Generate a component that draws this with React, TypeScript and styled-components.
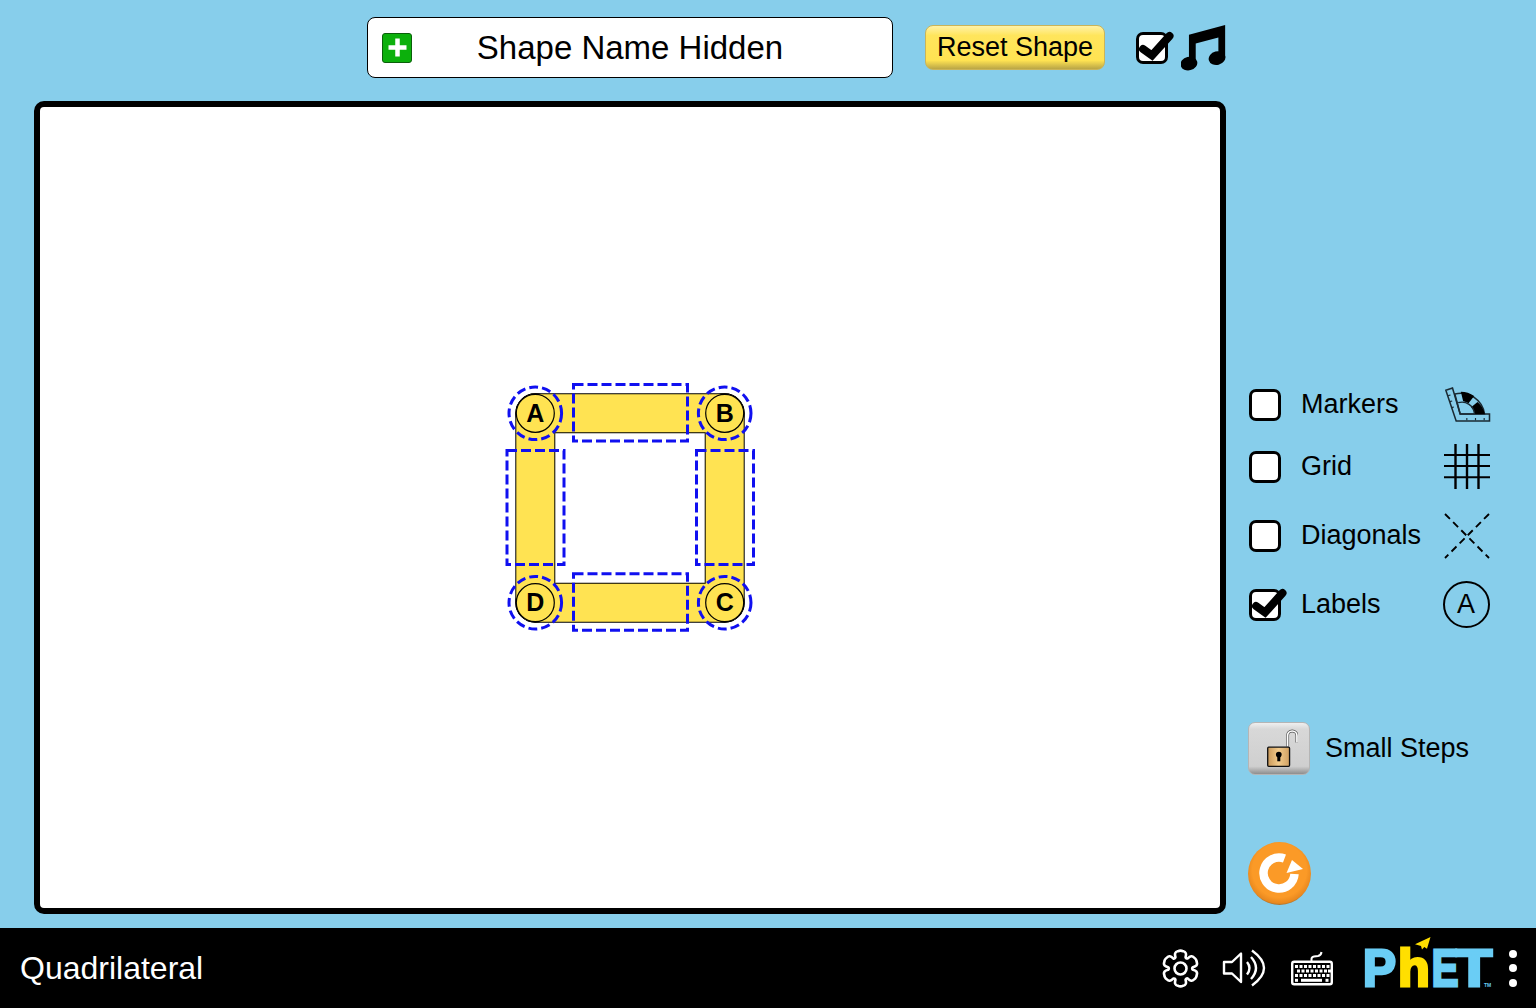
import React from 'react';
import styled, { createGlobalStyle } from 'styled-components';

const GlobalStyle = createGlobalStyle`
  * {
    box-sizing: border-box;
  }
  html, body {
    margin: 0;
    padding: 0;
    background: #87ceeb;
  }
  body {
    font-family: "Liberation Sans", Arial, sans-serif;
    color: #000;
  }
`;

const vertices = [
  { label: 'A', x: 535.3, y: 413.3 },
  { label: 'B', x: 724.7, y: 413.3 },
  { label: 'C', x: 724.7, y: 602.7 },
  { label: 'D', x: 535.3, y: 602.7 },
];

const sideBands = [
  { x: 516.3, y: 394.3, w: 227.4, h: 38 },
  { x: 516.3, y: 583.7, w: 227.4, h: 38 },
  { x: 516.3, y: 394.3, w: 38, h: 227.4 },
  { x: 705.7, y: 394.3, w: 38, h: 227.4 },
];

const sideHandles = [
  { x: 573.5, y: 384.5, w: 114, h: 56.5 },
  { x: 573.5, y: 573.8, w: 114, h: 56.5 },
  { x: 507, y: 450.5, w: 57, h: 114 },
  { x: 696.5, y: 450.5, w: 57, h: 114 },
];

function gearPath(cx: number, cy: number): string {
  const outer = 17.4;
  const inner = 12.4;
  const points: string[] = [];
  for (let i = 0; i < 6; i++) {
    const a = (i * Math.PI) / 3 - Math.PI / 2;
    const pt = (r: number, off: number) =>
      `${(cx + r * Math.cos(a + off)).toFixed(2)} ${(cy + r * Math.sin(a + off)).toFixed(2)}`;
    points.push(
      `${i === 0 ? 'M' : 'L'}${pt(inner, -0.42)}`,
      `Q${pt(outer + 0.4, -0.38)} ${pt(outer, -0.16)}`,
      `Q${pt(outer + 1.2, 0)} ${pt(outer, 0.16)}`,
      `Q${pt(outer + 0.4, 0.38)} ${pt(inner, 0.42)}`,
      `Q${pt(inner - 1.4, 0.52)} ${pt(inner, 0.62)}`,
    );
  }
  return points.join(' ') + ' Z';
}

const CheckBox = ({ checked }: { checked?: boolean }) => (
  <CheckFrame>
    {checked && (
      <CheckMark viewBox="0 0 40 30" width={40} height={30}>
        <path
          d="M7 17 L16 23.5 L33.5 4"
          fill="none"
          stroke="#000"
          strokeWidth={8}
          strokeLinecap="round"
          strokeLinejoin="miter"
        />
      </CheckMark>
    )}
  </CheckFrame>
);

const MusicIcon = () => (
  <svg viewBox="845 75 132 136" width={45} height={46}>
    <path d="M868 104 L975 75 L975 172 L955 172 L955 112 L888 130 L888 190 L868 190 Z" fill="#000" />
    <ellipse cx={868} cy={189} rx={25} ry={20} fill="#000" transform="rotate(-14 868 189)" />
    <ellipse cx={951} cy={173} rx={25} ry={20} fill="#000" transform="rotate(-14 951 173)" />
  </svg>
);

const Diagram = () => (
  <svg viewBox="505 383 250 250" width={250} height={250}>
    {sideBands.map((b, i) => (
      <rect key={i} x={b.x} y={b.y} width={b.w} height={b.h} rx={19} fill="#000" stroke="#000" strokeWidth={2} />
    ))}
    {sideBands.map((b, i) => (
      <rect key={i} x={b.x} y={b.y} width={b.w} height={b.h} rx={19} fill="#ffe352" />
    ))}
    {vertices.map((v) => (
      <circle key={v.label} cx={v.x} cy={v.y} r={19} fill="#ffe352" stroke="#000" strokeWidth={1.2} />
    ))}
    {vertices.map((v) => (
      <VertexLabel key={v.label} x={v.x} y={v.y + 8.5} textAnchor="middle">
        {v.label}
      </VertexLabel>
    ))}
    {sideHandles.map((h, i) => (
      <rect
        key={i}
        x={h.x}
        y={h.y}
        width={h.w}
        height={h.h}
        fill="none"
        stroke="#1010f0"
        strokeWidth={3}
        strokeDasharray="10 4"
      />
    ))}
    {vertices.map((v) => (
      <circle
        key={v.label}
        cx={v.x}
        cy={v.y}
        r={26.3}
        fill="none"
        stroke="#1010f0"
        strokeWidth={3}
        strokeDasharray="9 4"
      />
    ))}
  </svg>
);

const ruleTicks = [
  'M624 61 L631 59',
  'M629 79 L636 77',
  'M634 97 L641 95',
  'M680 128 L680 135',
  'M706 128 L706 135',
  'M732 128 L732 135',
];

const MarkersIcon = () => (
  <svg viewBox="612 35 140 108" width={47} height={36}>
    <path d="M617 45 L637 38 L660 116 L748 116 L748 137 L648 137 Z" fill="none" stroke="#1a2a33" strokeWidth={4.6} />
    {ruleTicks.map((d) => (
      <path key={d} d={d} stroke="#1a2a33" strokeWidth={3.4} />
    ))}
    <path d="M644 56 A72 72 0 0 1 733 116 L660 116 Z" fill="none" stroke="#1a2a33" strokeWidth={4.6} />
    <path d="M662 49 A70 70 0 0 1 702 62 L685 84 A38 38 0 0 0 669 78 Z" fill="#000" />
    <path d="M712 80 A68 68 0 0 1 734 116 L704 116 A38 38 0 0 0 693 96 Z" fill="#000" />
    <path d="M654 82 A38 38 0 0 1 703 116" fill="none" stroke="#1a2a33" strokeWidth={4} />
  </svg>
);

const GridIcon = () => (
  <svg viewBox="0 0 46 45" width={46} height={45}>
    {[11.5, 23, 34.5].map((x) => (
      <line key={x} x1={x} y1={0} x2={x} y2={45} stroke="#000" strokeWidth={2.4} />
    ))}
    {[11, 22, 33.3].map((y) => (
      <line key={y} x1={0} y1={y} x2={46} y2={y} stroke="#000" strokeWidth={1.9} />
    ))}
  </svg>
);

const DiagonalsIcon = () => (
  <svg viewBox="0 0 46 46" width={46} height={46}>
    <line x1={1} y1={1} x2={45} y2={45} stroke="#000" strokeWidth={1.9} strokeDasharray="7 4.5" />
    <line x1={45} y1={1} x2={1} y2={45} stroke="#000" strokeWidth={1.9} strokeDasharray="7 4.5" />
  </svg>
);

const LockIcon = () => (
  <svg viewBox="82 56 92 116" width={31} height={39}>
    <defs>
      <linearGradient id="lockBody" x1="0" x2="1" y1="0" y2="0">
        <stop offset="0" stopColor="#c9995a" />
        <stop offset="0.5" stopColor="#f2cb8c" />
        <stop offset="1" stopColor="#d0a163" />
      </linearGradient>
    </defs>
    <path d="M143 108 L143 76 A14 14 0 0 1 171 76 L171 96" fill="none" stroke="#555" strokeWidth={9} />
    <path d="M143 108 L143 76 A14 14 0 0 1 171 76 L171 96" fill="none" stroke="#fff" strokeWidth={5} />
    <rect x={84} y={110} width={65} height={57} rx={3} fill="url(#lockBody)" stroke="#111" strokeWidth={4} />
    <circle cx={117} cy={132} r={8.5} fill="#000" />
    <rect x={112.5} y={134} width={9} height={18} fill="#000" />
  </svg>
);

const ResetAllIcon = () => (
  <svg viewBox="0 0 63 63" width={63} height={63}>
    <defs>
      <radialGradient id="resetBall" cx="0.5" cy="0.45" r="0.55">
        <stop offset="0.78" stopColor="#fb9a27" />
        <stop offset="0.95" stopColor="#e8881f" />
        <stop offset="1" stopColor="#a5702f" />
      </radialGradient>
    </defs>
    <circle cx={31.5} cy={31.5} r={31.5} fill="url(#resetBall)" />
    <path d="M36.5 16.5 A15.5 15.5 0 1 0 46.5 32" fill="none" stroke="#fff" strokeWidth={8.5} />
    <path d="M44 18 L55 27 L38.5 31 Z" fill="#fff" />
  </svg>
);

const keyRows = [
  { y: 961.5, xs: [1295, 1299.5, 1304, 1308.5, 1313, 1317.5, 1322, 1326.5] },
  { y: 966, xs: [1297, 1301.5, 1306, 1310.5, 1315, 1319.5, 1324, 1328] },
  { y: 970.5, xs: [1295, 1299.5, 1304, 1308.5, 1313, 1317.5, 1322, 1326.5] },
];

const KeyboardIcon = () => (
  <svg viewBox="1290 945 44 36" width={44} height={36}>
    <rect x={1292.2} y={956.8} width={39.6} height={22.4} rx={2} fill="none" stroke="#fff" strokeWidth={2.4} />
    <path d="M1311.5 957 L1311.5 954 Q1311.5 952 1314 951.5 L1318 951 Q1321 950.5 1321.5 947" fill="none" stroke="#fff" strokeWidth={2} />
    {keyRows.map((row) =>
      row.xs.map((x) => <rect key={`${row.y}-${x}`} x={x} y={row.y - 1.5} width={3} height={3} fill="#fff" />),
    )}
    <rect x={1295} y={973.8} width={3} height={3} fill="#fff" />
    <rect x={1301} y={973.8} width={21} height={3} fill="#fff" />
    <rect x={1325.5} y={973.8} width={3} height={3} fill="#fff" />
  </svg>
);

const SoundIcon = () => (
  <svg viewBox="1222 948 44 40" width={44} height={40}>
    <path
      d="M1224 962 L1232 962 L1241 953.5 L1241 982 L1232 973.5 L1224 973.5 Z"
      fill="none"
      stroke="#fff"
      strokeWidth={2.4}
      strokeLinejoin="round"
    />
    <path d="M1247 962 Q1252 968 1247 974.5" fill="none" stroke="#fff" strokeWidth={2.4} />
    <path d="M1251 957 Q1261 968 1251 979" fill="none" stroke="#fff" strokeWidth={2.4} />
    <path d="M1252 950.5 Q1276 968 1252 985.5" fill="none" stroke="#fff" strokeWidth={2.4} />
  </svg>
);

const GearIcon = () => (
  <svg viewBox="1161 948 39 39" width={39} height={39}>
    <path d={gearPath(1180.5, 967.5)} fill="none" stroke="#fff" strokeWidth={2.6} strokeLinejoin="round" />
    <circle cx={1180.5} cy={967.5} r={6} fill="none" stroke="#fff" strokeWidth={2.6} />
  </svg>
);

const PhetGlyph = ({ x, sx, fill, children }: { x: number; sx: number; fill: string; children: string }) => (
  <LogoLetter transform={`translate(${x} 985.5) scale(${sx} 1)`} fill={fill} stroke={fill}>
    {children}
  </LogoLetter>
);

const PhetLogo = () => (
  <svg viewBox="1360 933 138 70" width={138} height={70}>
    <PhetGlyph x={1363} sx={0.95} fill="#6acdf5">P</PhetGlyph>
    <PhetGlyph x={1398} sx={1} fill="#ffdf00">h</PhetGlyph>
    <PhetGlyph x={1431.7} sx={0.77} fill="#6acdf5">E</PhetGlyph>
    <PhetGlyph x={1456.3} sx={1.13} fill="#6acdf5">T</PhetGlyph>
    <path d="M1430.5 937 L1415 944.3 L1421 946 L1422 949.5 L1424.3 947 L1427 948.7 Z" fill="#ffdf00" />
    <LogoMark x={1484} y={987} fill="#6acdf5">
      TM
    </LogoMark>
  </svg>
);

const App = () => (
  <>
    <GlobalStyle />
    <Page>
      <Main>
        <StageColumn>
          <TopBar>
            <NameBox>
              <PlusButton>
                <svg viewBox="0 0 30 30" width={27} height={27}>
                  <path d="M12.5 5h5v7.5H25v5h-7.5V25h-5v-7.5H5v-5h7.5z" fill="#fff" />
                </svg>
              </PlusButton>
              <NameText>Shape Name Hidden</NameText>
            </NameBox>
            <ResetShapeButton>Reset Shape</ResetShapeButton>
            <SoundToggle>
              <CheckBox checked />
              <MusicIcon />
            </SoundToggle>
          </TopBar>
          <Canvas>
            <Diagram />
          </Canvas>
        </StageColumn>
        <SidePanel>
          <OptionRow $top={389}>
            <CheckBox />
            <OptionLabel>Markers</OptionLabel>
            <OptionIcon>
              <MarkersIcon />
            </OptionIcon>
          </OptionRow>
          <OptionRow $top={31}>
            <CheckBox />
            <OptionLabel>Grid</OptionLabel>
            <OptionIcon>
              <GridIcon />
            </OptionIcon>
          </OptionRow>
          <OptionRow $top={38}>
            <CheckBox />
            <OptionLabel>Diagonals</OptionLabel>
            <OptionIcon>
              <DiagonalsIcon />
            </OptionIcon>
          </OptionRow>
          <OptionRow $top={38}>
            <CheckBox checked />
            <OptionLabel>Labels</OptionLabel>
            <OptionIcon>
              <LabelRing>A</LabelRing>
            </OptionIcon>
          </OptionRow>
          <StepsRow>
            <LockButton>
              <LockIcon />
            </LockButton>
            <StepsLabel>Small Steps</StepsLabel>
          </StepsRow>
          <ResetAllButton>
            <ResetAllIcon />
          </ResetAllButton>
        </SidePanel>
      </Main>
      <NavBar>
        <SimTitle>Quadrilateral</SimTitle>
        <NavIcons>
          <NavItem $gap={0}>
            <GearIcon />
          </NavItem>
          <NavItem $gap={22}>
            <SoundIcon />
          </NavItem>
          <NavItem $gap={24}>
            <KeyboardIcon />
          </NavItem>
          <NavItem $gap={26}>
            <PhetLogo />
          </NavItem>
          <MenuDots>
            <span />
            <span />
            <span />
          </MenuDots>
        </NavIcons>
      </NavBar>
    </Page>
  </>
);

const Page = styled.div`
  width: 1536px;
  height: 1008px;
  display: flex;
  flex-direction: column;
  overflow: hidden;
  background: #87ceeb;
`;

const Main = styled.main`
  flex: 1 1 auto;
  display: flex;
  padding-left: 34px;
`;

const StageColumn = styled.div`
  width: 1192px;
  padding-top: 17px;
  display: flex;
  flex-direction: column;
`;

const TopBar = styled.div`
  height: 61px;
  margin-left: 333px;
  margin-bottom: 23px;
  display: flex;
  align-items: center;
`;

const NameBox = styled.div`
  flex: none;
  width: 526px;
  height: 61px;
  display: grid;
  grid-template-columns: 1fr auto 1fr;
  align-items: center;
  padding-left: 14px;
  padding-right: 14px;
  background: #fff;
  border: 1.5px solid #000;
  border-radius: 8px;
`;

const PlusButton = styled.div`
  width: 30px;
  height: 30px;
  display: flex;
  align-items: center;
  justify-content: center;
  background: #0cb00c;
  border: 1px solid #0a5f0a;
  border-radius: 3px;
`;

const NameText = styled.div`
  font-size: 33px;
  line-height: 40px;
  white-space: nowrap;
`;

const ResetShapeButton = styled.button`
  flex: none;
  width: 180px;
  height: 45px;
  margin-left: 32px;
  padding: 0;
  font-family: inherit;
  font-size: 27px;
  color: #000;
  white-space: nowrap;
  border: 1px solid #c9b45a;
  border-radius: 8px;
  background: linear-gradient(#fff2a8 0, #ffe55c 22%, #ffe352 80%, #b9a546 100%);
`;

const SoundToggle = styled.div`
  flex: none;
  margin-left: 31px;
  display: flex;
  align-items: center;
  gap: 13px;
`;

const CheckFrame = styled.div`
  position: relative;
  flex: none;
  width: 32px;
  height: 32px;
  background: #fff;
  border: 3px solid #000;
  border-radius: 7px;
`;

const CheckMark = styled.svg`
  position: absolute;
  left: -3px;
  top: -3px;
  overflow: visible;
`;

const Canvas = styled.div`
  width: 1192px;
  height: 813px;
  display: flex;
  align-items: center;
  justify-content: center;
  background: #fff;
  border: 6px solid #000;
  border-radius: 10px;
`;

const VertexLabel = styled.text`
  font-family: "Liberation Sans", Arial, sans-serif;
  font-size: 25px;
  font-weight: 700;
  fill: #000;
`;

const SidePanel = styled.div`
  width: 310px;
  padding-left: 22px;
  display: flex;
  flex-direction: column;
  align-items: flex-start;
`;

const OptionRow = styled.div<{ $top: number }>`
  width: 243px;
  height: 31px;
  margin-top: ${(p) => p.$top}px;
  padding-left: 0.5px;
  display: flex;
  align-items: center;
`;

const OptionLabel = styled.span`
  margin-left: 20.5px;
  flex: 1 1 auto;
  font-size: 27px;
  white-space: nowrap;
`;

const OptionIcon = styled.span`
  flex: none;
  width: 48px;
  height: 31px;
  display: flex;
  align-items: center;
  justify-content: center;
`;

const LabelRing = styled.span`
  flex: none;
  width: 47px;
  height: 47px;
  margin-right: 2px;
  display: flex;
  align-items: center;
  justify-content: center;
  font-size: 27px;
  border: 2px solid #000;
  border-radius: 50%;
`;

const StepsRow = styled.div`
  margin-top: 102px;
  display: flex;
  align-items: center;
  gap: 15px;
`;

const LockButton = styled.button`
  width: 62px;
  height: 53px;
  padding: 0 0 0 6px;
  display: flex;
  align-items: center;
  justify-content: center;
  border: 1px solid #b5b5b5;
  border-radius: 7px;
  background: linear-gradient(#efefef 0, #d8d8d8 12%, #cfcfcf 85%, #8e8e8e 100%);
`;

const StepsLabel = styled.span`
  font-size: 27px;
  white-space: nowrap;
`;

const ResetAllButton = styled.button`
  width: 63px;
  height: 63px;
  margin-top: 67px;
  padding: 0;
  display: block;
  border: 0;
  background: none;
`;

const NavBar = styled.footer`
  flex: none;
  height: 80px;
  padding: 0 19px 0 20px;
  display: flex;
  align-items: center;
  justify-content: space-between;
  background: #000;
`;

const SimTitle = styled.div`
  font-size: 32px;
  color: #fff;
  white-space: nowrap;
`;

const NavIcons = styled.div`
  display: flex;
  align-items: center;
`;

const NavItem = styled.div<{ $gap: number }>`
  display: flex;
  margin-left: ${(p) => p.$gap}px;
`;

const LogoLetter = styled.text`
  font-family: "Liberation Sans", Arial, sans-serif;
  font-size: 52px;
  font-weight: 700;
  stroke-width: 3px;
  stroke-linejoin: miter;
`;

const LogoMark = styled.text`
  font-family: "Liberation Sans", Arial, sans-serif;
  font-size: 5px;
  font-weight: 700;
`;

const MenuDots = styled.div`
  margin-left: 11px;
  display: flex;
  flex-direction: column;
  gap: 6.5px;
  span {
    display: block;
    width: 8px;
    height: 8px;
    border-radius: 50%;
    background: #fff;
  }
`;

export default App;
